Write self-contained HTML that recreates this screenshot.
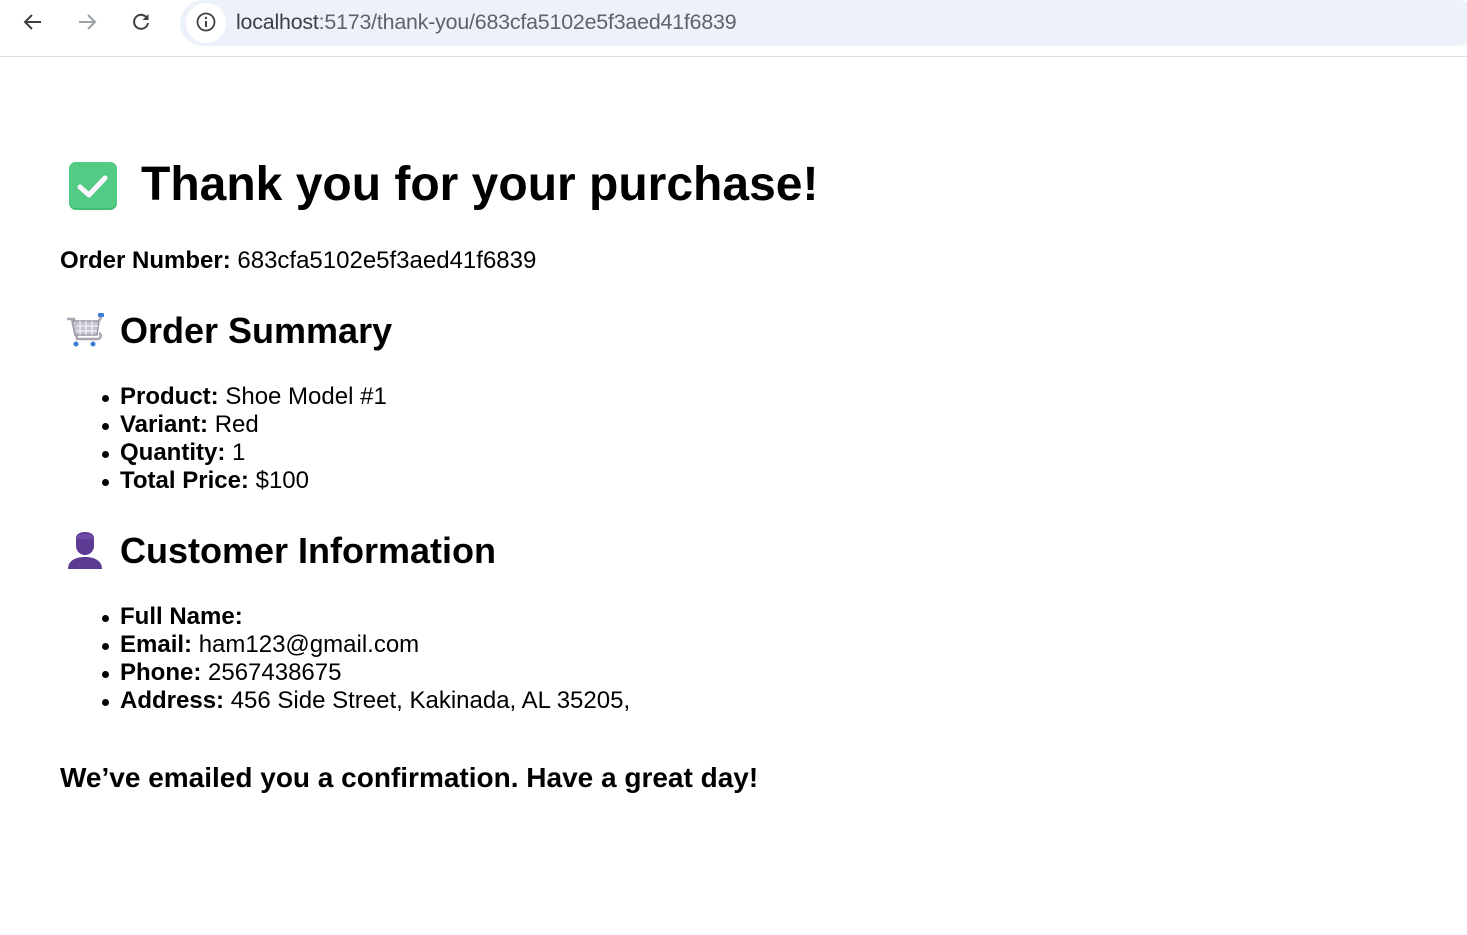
<!DOCTYPE html>
<html><head><meta charset="utf-8"><style>
html,body{margin:0;padding:0;width:1467px;height:935px;overflow:hidden;background:#fff;font-family:"Liberation Sans",Arial,sans-serif;color:#000}
.bar{position:absolute;left:0;top:0;width:1467px;height:56px;background:#fff;border-bottom:1px solid #d9dce0}
.pill{position:absolute;left:180px;top:0;width:1300px;height:46px;background:#edf2fa;border-radius:23px}
.url{position:absolute;left:236px;top:10px;font-size:21.4px;color:#3c4043;letter-spacing:-0.2px}
.url span{color:#5f6368}
.a{position:absolute;white-space:nowrap}
.t1{font-size:48px;font-weight:bold;left:141px;top:157px}
.p{font-size:24px;line-height:28px}
.h2{font-size:36px;font-weight:bold}
ul{margin:0;padding:0;list-style:none}
li{position:relative;font-size:24px;line-height:28px;height:28px}
li:before{content:"";position:absolute;left:-18px;top:12px;width:7px;height:7px;border-radius:50%;background:#000}
</style></head><body>
<div class="bar">
<svg style="position:absolute;left:22px;top:11px" width="22" height="22" viewBox="0 0 22 22"><path d="M19 11H4M10 4l-7 7 7 7" fill="none" stroke="#3c4043" stroke-width="2"/></svg>
<svg style="position:absolute;left:76px;top:11px" width="22" height="22" viewBox="0 0 22 22"><path d="M3 11h15M12 4l7 7-7 7" fill="none" stroke="#9aa0a6" stroke-width="2"/></svg>
<svg style="position:absolute;left:130px;top:11px" width="22" height="22" viewBox="0 0 22 22"><path d="M17.5 8A7 7 0 1 0 18 12" fill="none" stroke="#3c4043" stroke-width="2"/><path d="M18.5 3v6h-6z" fill="#3c4043"/></svg>
<div class="pill"></div>
<div style="position:absolute;left:186px;top:3px;width:40px;height:40px;border-radius:50%;background:#fff"></div>
<svg style="position:absolute;left:195px;top:11px" width="22" height="22" viewBox="0 0 22 22"><circle cx="11" cy="11" r="8.5" fill="none" stroke="#3c4043" stroke-width="1.8"/><path d="M11 10v6" stroke="#3c4043" stroke-width="2"/><circle cx="11" cy="7" r="1.2" fill="#3c4043"/></svg>
<div class="url">localhost<span>:5173/thank-you/683cfa5102e5f3aed41f6839</span></div>
</div>

<svg class="a" style="left:67px;top:160px" width="52" height="52" viewBox="0 0 52 52"><rect x="2" y="2" width="48" height="48" rx="7" fill="#3fbf74"/><rect x="2" y="2" width="48" height="46" rx="7" fill="#52cb84"/><path d="M13 27l9 8 16-17" fill="none" stroke="#fbf6ff" stroke-width="5" stroke-linecap="round" stroke-linejoin="round"/></svg>
<div class="a t1">Thank you for your purchase!</div>

<div class="a p" style="left:60px;top:247px"><b>Order Number:</b> 683cfa5102e5f3aed41f6839</div>

<svg class="a" style="left:65px;top:313px" width="40" height="36" viewBox="0 0 40 36"><path d="M2 6h7l3 20h20" fill="none" stroke="#a9a5b2" stroke-width="2.5"/><path d="M7 8h27l-2 14H10z" fill="#c8c4cf" stroke="#9a96a3" stroke-width="1.5"/><path d="M12 13h21M11 18h21M15 8v14M21 8v14M27 8v14" stroke="#f1eff4" stroke-width="1.3"/><path d="M34 8l3-6" stroke="#a9a5b2" stroke-width="2.5"/><rect x="33" y="0" width="6" height="4" rx="1" fill="#3c7fd6"/><path d="M32 26c4 0 5-4 2-6" fill="none" stroke="#a9a5b2" stroke-width="2.5"/><circle cx="11" cy="31" r="2.5" fill="#3c7fd6"/><circle cx="28" cy="31" r="2.5" fill="#3c7fd6"/></svg>
<div class="a h2" style="left:120px;top:310px">Order Summary</div>

<ul class="a" style="left:120px;top:383px">
<li><b>Product:</b> Shoe Model #1</li>
<li><b>Variant:</b> Red</li>
<li><b>Quantity:</b> 1</li>
<li><b>Total Price:</b> $100</li>
</ul>

<svg class="a" style="left:66px;top:532px" width="38" height="38" viewBox="0 0 38 38"><path d="M10 6c0-4 4-6 9-6s9 2 9 6v8c0 5-4 9-9 9s-9-4-9-9z" fill="#5b3a93"/><path d="M2 37c0-8 7-12 17-12s17 4 17 12z" fill="#5b3a93"/><path d="M11 4c2-3 14-3 16 0v3H11z" fill="#6e4aa8"/></svg>
<div class="a h2" style="left:120px;top:530px">Customer Information</div>

<ul class="a" style="left:120px;top:603px">
<li><b>Full Name:</b></li>
<li><b>Email:</b> ham123@gmail.com</li>
<li><b>Phone:</b> 2567438675</li>
<li><b>Address:</b> 456 Side Street, Kakinada, AL 35205,</li>
</ul>

<div class="a" style="left:60px;top:762px;font-size:28px;font-weight:bold">We’ve emailed you a confirmation. Have a great day!</div>
</body></html>
